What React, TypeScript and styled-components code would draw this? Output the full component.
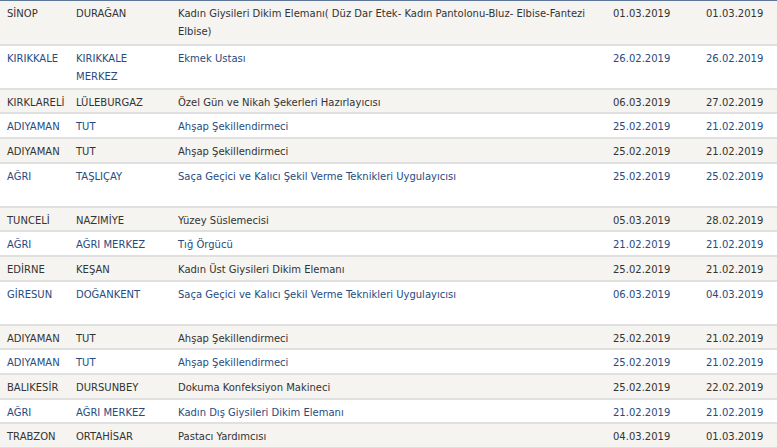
import React from 'react';
import styled, { createGlobalStyle } from 'styled-components';

interface IRow {
    city: string;
    district: string;
    course: string;
    start: string;
    end: string;
    tall?: boolean;
}

const rows: IRow[] = [
    {
        city: 'SİNOP',
        district: 'DURAĞAN',
        course: 'Kadın Giysileri Dikim Elemanı( Düz Dar Etek- Kadın Pantolonu-Bluz- Elbise-Fantezi Elbise)',
        start: '01.03.2019',
        end: '01.03.2019',
        tall: true,
    },
    { city: 'KIRIKKALE', district: 'KIRIKKALE MERKEZ', course: 'Ekmek Ustası', start: '26.02.2019', end: '26.02.2019', tall: true },
    { city: 'KIRKLARELİ', district: 'LÜLEBURGAZ', course: 'Özel Gün ve Nikah Şekerleri Hazırlayıcısı', start: '06.03.2019', end: '27.02.2019' },
    { city: 'ADIYAMAN', district: 'TUT', course: 'Ahşap Şekillendirmeci', start: '25.02.2019', end: '21.02.2019' },
    { city: 'ADIYAMAN', district: 'TUT', course: 'Ahşap Şekillendirmeci', start: '25.02.2019', end: '21.02.2019' },
    {
        city: 'AĞRI',
        district: 'TAŞLIÇAY',
        course: 'Saça Geçici ve Kalıcı Şekil Verme Teknikleri Uygulayıcısı',
        start: '25.02.2019',
        end: '25.02.2019',
        tall: true,
    },
    { city: 'TUNCELİ', district: 'NAZIMİYE', course: 'Yüzey Süslemecisi', start: '05.03.2019', end: '28.02.2019' },
    { city: 'AĞRI', district: 'AĞRI MERKEZ', course: 'Tığ Örgücü', start: '21.02.2019', end: '21.02.2019' },
    { city: 'EDİRNE', district: 'KEŞAN', course: 'Kadın Üst Giysileri Dikim Elemanı', start: '25.02.2019', end: '21.02.2019' },
    {
        city: 'GİRESUN',
        district: 'DOĞANKENT',
        course: 'Saça Geçici ve Kalıcı Şekil Verme Teknikleri Uygulayıcısı',
        start: '06.03.2019',
        end: '04.03.2019',
        tall: true,
    },
    { city: 'ADIYAMAN', district: 'TUT', course: 'Ahşap Şekillendirmeci', start: '25.02.2019', end: '21.02.2019' },
    { city: 'ADIYAMAN', district: 'TUT', course: 'Ahşap Şekillendirmeci', start: '25.02.2019', end: '21.02.2019' },
    { city: 'BALIKESİR', district: 'DURSUNBEY', course: 'Dokuma Konfeksiyon Makineci', start: '25.02.2019', end: '22.02.2019' },
    { city: 'AĞRI', district: 'AĞRI MERKEZ', course: 'Kadın Dış Giysileri Dikim Elemanı', start: '21.02.2019', end: '21.02.2019' },
    { city: 'TRABZON', district: 'ORTAHİSAR', course: 'Pastacı Yardımcısı', start: '04.03.2019', end: '01.03.2019' },
];

const columnWidths = [69, 102, 435, 93, 78];

const GlobalStyle = createGlobalStyle`
    html, body {
        margin: 0;
        padding: 0;
        background: #ffffff;
        overflow: hidden;
    }
`;

const App: React.FC = () => (
    <>
        <GlobalStyle />
        <StyledTable>
            <colgroup>
                {columnWidths.map((w, i) => (
                    <StyledCol key={i} $width={w} />
                ))}
            </colgroup>
            <tbody>
                {rows.map((row, i) => (
                    <StyledRow key={i} $tall={row.tall}>
                        <StyledCell>{row.city}</StyledCell>
                        <StyledCell>{row.district}</StyledCell>
                        <StyledCell>{row.course}</StyledCell>
                        <StyledCell>{row.start}</StyledCell>
                        <StyledCell>{row.end}</StyledCell>
                    </StyledRow>
                ))}
            </tbody>
        </StyledTable>
    </>
);

const StyledTable = styled.table`
    width: 777px;
    table-layout: fixed;
    border-collapse: collapse;
    border-top: 1px solid #5d7597;
    font-family: 'DejaVu Sans', Verdana, sans-serif;
    font-size: 10px;
`;

const StyledCol = styled.col<{ $width: number }>`
    width: ${({ $width }) => $width}px;
`;

const StyledRow = styled.tr<{ $tall?: boolean }>`
    height: ${({ $tall }) => ($tall ? '44px' : '24.7px')};
    background-color: #ffffff;
    color: #274b80;

    &:nth-child(odd) {
        background-color: #f5f4f0;
        color: #333333;
    }
`;

const StyledCell = styled.td`
    padding: 4px 7px 0 7px;
    line-height: 18px;
    vertical-align: top;
    border-bottom: 2px solid #e0e0e0;
    white-space: normal;
    overflow: hidden;
`;

export default App;
